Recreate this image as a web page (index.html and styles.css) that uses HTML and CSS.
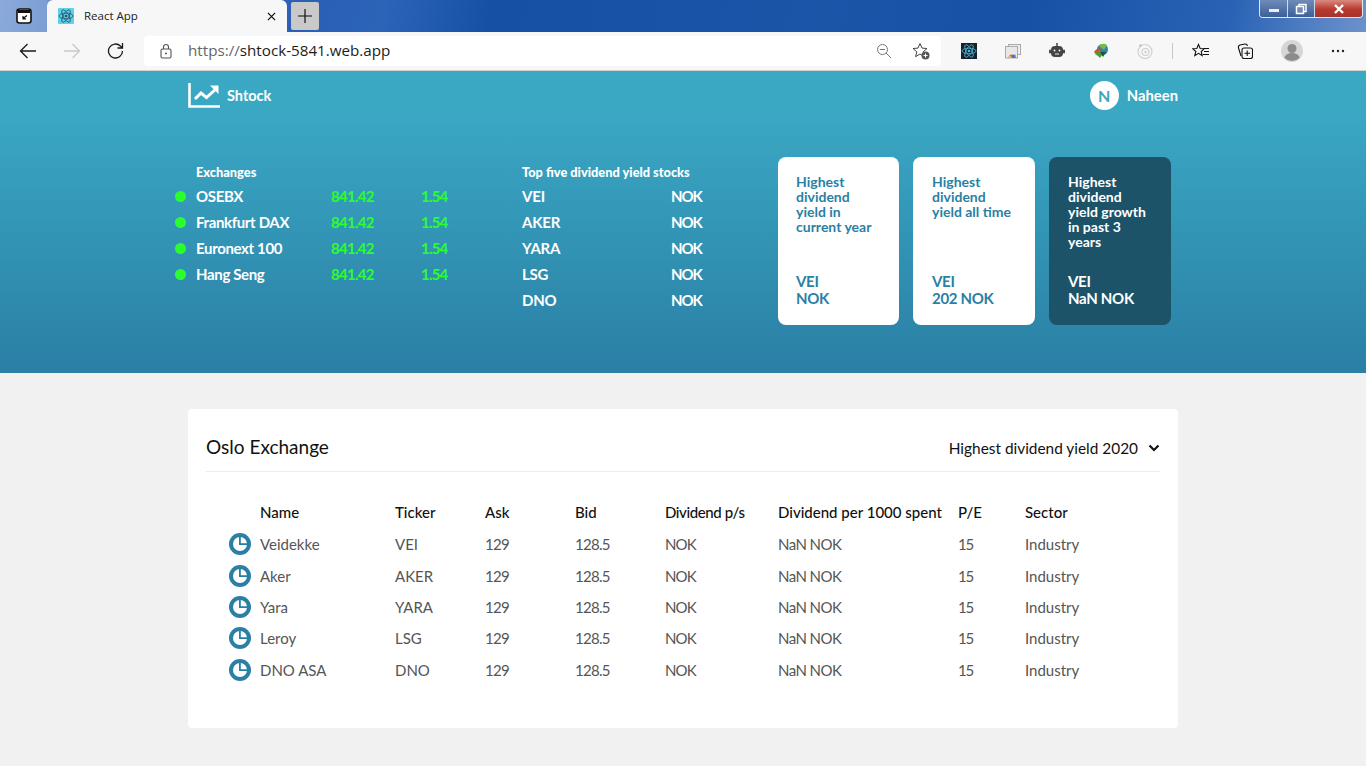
FILE: index.html
```html
<!DOCTYPE html>
<html lang="en">
<head>
<meta charset="utf-8">
<title>React App</title>
<link rel="stylesheet" href="styles.css">
</head>
<body>
<div class="titlebar">
  <div class="tab-left">
    <svg class="ic16" viewBox="0 0 16 16"><rect x="1" y="1" width="14" height="14" rx="2.500" fill="#fff" stroke="#111" stroke-width="1.600"/><path d="M2 2h12v3H2z" fill="#111"/><path d="M11 7.500 7 10.500M7 8v2.800h3" fill="none" stroke="#111" stroke-width="1.200"/></svg>
  </div>
  <div class="tab">
    <svg class="favicon" viewBox="0 0 16 16"><rect width="16" height="16" rx="1" fill="#5fd0ee"/><g fill="none" stroke="#24505f" stroke-width=".8"><ellipse cx="8" cy="8" rx="7" ry="2.800"/><ellipse cx="8" cy="8" rx="7" ry="2.800" transform="rotate(60 8 8)"/><ellipse cx="8" cy="8" rx="7" ry="2.800" transform="rotate(120 8 8)"/></g><circle cx="8" cy="8" r="1.300" fill="#24505f"/></svg>
    <span class="tab-title">React App</span>
    <svg class="tab-x" viewBox="0 0 10 10"><path d="M1 1l8 8M9 1l-8 8" stroke="#111" stroke-width="1.400"/></svg>
  </div>
  <div class="newtab"><svg viewBox="0 0 16 16"><path d="M8 1v14M1 8h14" stroke="#111" stroke-width="1.200"/></svg></div>
  <div class="winctl">
    <span class="wb wb-min"><i class="min-bar"></i></span>
    <span class="wb wb-max"><svg viewBox="0 0 12 12" width="12" height="12"><rect x="4" y="1.500" width="7" height="7" fill="none" stroke="#fff" stroke-width="1.500"/><rect x="1.500" y="3.500" width="7" height="7" fill="#6f8cb8" stroke="#fff" stroke-width="1.500"/></svg></span>
    <span class="wb wb-close"><svg viewBox="0 0 12 10" width="12" height="10"><path d="M2 1l8 8M10 1l-8 8" stroke="#fff" stroke-width="2.400"/></svg></span>
  </div>
</div>
<div class="toolbar">
  <svg class="nav" viewBox="0 0 18 18"><path d="M17 9H1.500M8.500 2 1.500 9l7 7" fill="none" stroke="#1a1a1a" stroke-width="1.300"/></svg>
  <svg class="nav nav-fwd" viewBox="0 0 18 18"><path d="M1 9h15.500M9.500 2l7 7-7 7" fill="none" stroke="#c9c9c9" stroke-width="1.300"/></svg>
  <svg class="nav nav-reload" viewBox="0 0 18 18"><path d="M15.500 9a7 7 0 1 1-2.100-5L15.500 6M15.500 1v5h-5" fill="none" stroke="#1a1a1a" stroke-width="1.300"/></svg>
  <div class="omnibox">
    <svg class="lock" viewBox="0 0 14 16"><rect x="2" y="6" width="10" height="9" rx="1.500" fill="none" stroke="#555" stroke-width="1.100"/><path d="M4.500 6V4a2.500 2.500 0 0 1 5 0v2" fill="none" stroke="#555" stroke-width="1.100"/><circle cx="7" cy="10.500" r="1" fill="#555"/></svg>
    <span class="url"><span class="url-dim">https://</span>shtock-5841.web.app</span>
    <svg class="omni-ic zoom-ic" viewBox="0 0 16 16"><circle cx="6.500" cy="6.500" r="5" fill="none" stroke="#777" stroke-width="1"/><path d="M10 10l5 5M4 6.500h5" stroke="#777" stroke-width="1"/></svg>
    <svg class="omni-ic fav-ic" viewBox="0 0 18 18"><path d="M8 1.500l2 4.600 5 .4-3.800 3.300 1.200 4.900L8 12l-4.400 2.700 1.200-4.900L1 6.500l5-.4z" fill="none" stroke="#444" stroke-width="1"/><circle cx="13.500" cy="13.500" r="4" fill="#555"/><path d="M13.500 11.500v4M11.500 13.500h4" stroke="#fff" stroke-width="1"/></svg>
  </div>
  <div class="ext">
    <svg class="ext-ic" viewBox="0 0 16 16"><rect width="16" height="16" fill="#14222c"/><g fill="none" stroke="#4fb8dc" stroke-width=".8"><ellipse cx="8" cy="8" rx="7" ry="2.800"/><ellipse cx="8" cy="8" rx="7" ry="2.800" transform="rotate(60 8 8)"/><ellipse cx="8" cy="8" rx="7" ry="2.800" transform="rotate(120 8 8)"/></g><circle cx="8" cy="8" r="1.300" fill="#4fb8dc"/></svg>
    <svg class="ext-ic" viewBox="0 0 16 16"><rect x="3.500" y="1.500" width="12" height="10" fill="#eee" stroke="#aaa"/><rect x=".5" y="3.500" width="12" height="11.500" fill="#e8e8e8" stroke="#aaa"/><path d="M3.500 15a3.500 3.500 0 0 1 7 0z" fill="#e34b3c"/><path d="M7 15a3.500 3.500 0 0 1 3.500-3.500V15z" fill="#3a7de0"/><path d="M3.500 15A3.500 3.500 0 0 1 5 12l2 3z" fill="#f2c230"/></svg>
    <svg class="ext-ic" viewBox="0 0 16 16"><path d="M8 0v3" stroke="#444" stroke-width="1.500"/><rect x="2" y="3" width="12" height="11" rx="4" fill="#444"/><rect x="0" y="6.500" width="2" height="4" rx="1" fill="#444"/><rect x="14" y="6.500" width="2" height="4" rx="1" fill="#444"/><circle cx="5.500" cy="7.500" r="1" fill="#eee"/><circle cx="10.500" cy="7.500" r="1" fill="#eee"/><path d="M6 11h4" stroke="#eee"/></svg>
    <svg class="ext-ic" viewBox="0 0 16 16"><circle cx="9.500" cy="6.500" r="5.500" fill="#2f7fb8"/><path d="M6 3a5.500 5.500 0 0 1 8-1l-3 5z" fill="#7fb93c"/><path d="M1 9a7 7 0 0 1 8-3l-2 2a5 5 0 0 0-4 3z" fill="#d6502c"/><path d="M2 11a6 6 0 0 1 6-3l1 4-2 3-2-2z" fill="#4e9a32"/><path d="M7 9h6l-3 5z" fill="#1d5a2a"/></svg>
    <svg class="ext-ic" viewBox="0 0 16 16"><g fill="none" stroke="#cfcfcf" stroke-width="1.200"><circle cx="8" cy="8.500" r="7"/><circle cx="8.500" cy="9" r="3.500"/></g><circle cx="3.500" cy="2.500" r="1.200" fill="#bdbdbd"/><circle cx="8.500" cy="9" r="1.200" fill="#cfcfcf"/></svg>
    <i class="ext-sep"></i>
    <svg class="ext-ic ext-star" viewBox="0 0 18 16"><path d="M6.500 1.500l1.700 4 4 .3-3 2.700 1 4.200-3.700-2.300-3.700 2.300 1-4.200-3-2.700 4-.3z" fill="none" stroke="#111" stroke-width="1.100"/><path d="M11.500 5.500H17M12 8.500h5M11 11.500h6" stroke="#111" stroke-width="1.100"/></svg>
    <svg class="ext-ic" viewBox="0 0 16 16"><path d="M4 13 1.500 5Q1 2.500 3 2l5-1q2-.2 2.500 2" fill="none" stroke="#111" stroke-width="1.100"/><rect x="5" y="5" width="10.500" height="10.500" rx="2" fill="#f7f7f7" stroke="#111" stroke-width="1.100"/><path d="M10.200 7.500v5.500M7.500 10.300h5.500" stroke="#111" stroke-width="1.100"/></svg>
    <svg class="avatar" viewBox="0 0 22 22"><circle cx="11" cy="11" r="11" fill="#d6d6d6"/><circle cx="11" cy="8.500" r="4.500" fill="#8c8c8c"/><path d="M3.500 18a7.500 5 0 0 1 15 0 11 11 0 0 1-15 0z" fill="#8c8c8c"/></svg>
    <svg class="more" viewBox="0 0 14 4"><circle cx="2" cy="2" r="1.200" fill="#222"/><circle cx="7" cy="2" r="1.200" fill="#222"/><circle cx="12" cy="2" r="1.200" fill="#222"/></svg>
  </div>
</div>
<section class="hero">
  <div class="topnav">
    <div class="brand">
      <svg class="brand-ic" viewBox="0 0 32 25"><path d="M1.500 0v23.500H32" fill="none" stroke="#fff" stroke-width="2.600"/><path d="M7 16l6-6 5.500 4.500L29 5" fill="none" stroke="#fff" stroke-width="3"/><path d="M22 2.500h8.500V11z" fill="#fff"/></svg>
      <span>Shtock</span>
    </div>
    <div class="user"><span class="user-badge">N</span><span>Naheen</span></div>
  </div>
  <div class="hero-main">
    <div class="exchanges">
      <div class="col-title ex-title">Exchanges</div>
      <div class="ex-row"><i class="dot"></i><span class="ex-name">OSEBX</span><span class="ex-val">841.42</span><span class="ex-chg">1.54</span></div>
      <div class="ex-row"><i class="dot"></i><span class="ex-name">Frankfurt DAX</span><span class="ex-val">841.42</span><span class="ex-chg">1.54</span></div>
      <div class="ex-row"><i class="dot"></i><span class="ex-name">Euronext 100</span><span class="ex-val">841.42</span><span class="ex-chg">1.54</span></div>
      <div class="ex-row"><i class="dot"></i><span class="ex-name">Hang Seng</span><span class="ex-val">841.42</span><span class="ex-chg">1.54</span></div>
    </div>
    <div class="top-five">
      <div class="col-title">Top five dividend yield stocks</div>
      <div class="tf-row"><span class="tf-name">VEI</span><span class="tf-val">NOK</span></div>
      <div class="tf-row"><span class="tf-name">AKER</span><span class="tf-val">NOK</span></div>
      <div class="tf-row"><span class="tf-name">YARA</span><span class="tf-val">NOK</span></div>
      <div class="tf-row"><span class="tf-name">LSG</span><span class="tf-val">NOK</span></div>
      <div class="tf-row"><span class="tf-name">DNO</span><span class="tf-val">NOK</span></div>
    </div>
    <div class="cards">
      <div class="card card-a"><div class="card-title">Highest dividend yield in current year</div><div class="card-val">VEI<br>NOK</div></div>
      <div class="card card-b"><div class="card-title">Highest dividend yield all time</div><div class="card-val">VEI<br>202 NOK</div></div>
      <div class="card card-dark card-b"><div class="card-title">Highest dividend yield growth in past 3 years</div><div class="card-val">VEI<br>NaN NOK</div></div>
    </div>
  </div>
</section>
<main class="content">
  <div class="panel">
    <div class="panel-head">
      <h2 class="panel-title">Oslo Exchange</h2>
      <div class="select">Highest dividend yield 2020<svg class="chev" viewBox="0 0 12 8"><path d="M1.500 1.500 6 6l4.500-4.500" fill="none" stroke="#111" stroke-width="2.200"/></svg></div>
    </div>
    <table class="stocks">
      <thead>
        <tr><th class="c-ic"></th><th class="c-name">Name</th><th class="c-tk">Ticker</th><th class="c-ask">Ask</th><th class="c-bid">Bid</th><th class="c-dv">Dividend p/s</th><th class="c-dk">Dividend per 1000 spent</th><th class="c-pe">P/E</th><th>Sector</th></tr>
      </thead>
      <tbody>
        <tr><td><svg class="pie" viewBox="0 0 22 22"><use href="#pie"/></svg></td><td>Veidekke</td><td>VEI</td><td>129</td><td>128.5</td><td>NOK</td><td>NaN NOK</td><td>15</td><td>Industry</td></tr>
        <tr class="r2"><td><svg class="pie" viewBox="0 0 22 22"><use href="#pie"/></svg></td><td>Aker</td><td>AKER</td><td>129</td><td>128.5</td><td>NOK</td><td>NaN NOK</td><td>15</td><td>Industry</td></tr>
        <tr><td><svg class="pie" viewBox="0 0 22 22"><use href="#pie"/></svg></td><td>Yara</td><td>YARA</td><td>129</td><td>128.5</td><td>NOK</td><td>NaN NOK</td><td>15</td><td>Industry</td></tr>
        <tr><td><svg class="pie" viewBox="0 0 22 22"><use href="#pie"/></svg></td><td>Leroy</td><td>LSG</td><td>129</td><td>128.5</td><td>NOK</td><td>NaN NOK</td><td>15</td><td>Industry</td></tr>
        <tr class="r2"><td><svg class="pie" viewBox="0 0 22 22"><use href="#pie"/></svg></td><td>DNO ASA</td><td>DNO</td><td>129</td><td>128.5</td><td>NOK</td><td>NaN NOK</td><td>15</td><td>Industry</td></tr>
      </tbody>
    </table>
  </div>
</main>
<svg class="defs" width="0" height="0"><defs><g id="pie"><circle cx="11" cy="11" r="11" fill="#2a7fa5"/><circle cx="11" cy="11" r="7" fill="#fff"/><path d="M10 3v9h9v-1.800h-7.200V3z" fill="#2a7fa5"/></g></defs></svg>
</body>
</html>
```
FILE: styles.css
```css
* { box-sizing: border-box; }
html, body { margin: 0; padding: 0; }
body { width: 1366px; height: 766px; overflow: hidden; background: #f1f1f1; font-family: "Lato", "Liberation Sans", sans-serif; color: #111; }
i { display: block; }
.defs { position: absolute; }

.titlebar { height: 32px; display: flex; position: relative; background: linear-gradient(100deg, #7c9fd6 0, #6d94cf 3%, #2a5fb4 22%, #2c64b8 28%, #1550a5 36%, #1a55a8 60%, #1651a6 75%, #2a63b5 90%, #6d92cc 100%); }
.tab-left { width: 47px; height: 32px; display: flex; align-items: center; justify-content: center; padding-left: 1px; background: rgba(255,255,255,.12); }
.ic16 { width: 16px; height: 16px; }
.tab { width: 240px; height: 32px; background: #f7f7f7; border-radius: 6px 6px 0 0; display: flex; align-items: center; padding: 0 11px; }
.favicon { width: 16px; height: 16px; margin-right: 10px; }
.tab-title { flex: 1; font: 11.500px "Open Sans", sans-serif; color: #222; margin-bottom: 1px; }
.tab-x { width: 9px; height: 9px; }
.newtab { width: 28px; height: 28px; margin: 2px 0 0 4px; background: #c9c9c9; border-radius: 2px; display: flex; align-items: center; justify-content: center; }
.newtab svg { width: 16px; height: 16px; }
.winctl { margin-left: auto; margin-right: 3px; width: 104px; height: 18px; display: flex; border: 1px solid #dfe7f2; border-top: 0; border-radius: 0 0 4px 4px; overflow: hidden; }
.wb { display: flex; align-items: center; justify-content: center; height: 17px; }
.wb-min { width: 28px; background: linear-gradient(#6f8cb8, #3c5f98); border-right: 1px solid #cfd9ea; }
.min-bar { width: 10px; height: 3px; background: #eee; margin-top: 4px; }
.wb-max { width: 27px; background: linear-gradient(#6f8cb8, #3c5f98); border-right: 1px solid #cfd9ea; }
.wb-close { flex: 1; background: linear-gradient(#d98a80, #b8392f 55%, #a8332b); }

.toolbar { height: 39px; background: #f7f7f7; border-bottom: 1px solid #d2d2d2; display: flex; align-items: center; }
.nav { width: 18px; height: 18px; margin-left: 19px; }
.nav-fwd { margin-left: 26px; }
.nav-reload { margin-left: 26px; }
.omnibox { width: 797px; height: 30px; margin-left: 19px; background: #fff; border-radius: 4px; display: flex; align-items: center; padding-left: 15px; }
.lock { width: 14px; height: 16px; }
.url { margin: 0 0 2px 15px; font: 15.200px/20px "Open Sans", sans-serif; color: #1d1d1d; flex: 1; }
.url-dim { color: #666; }
.omni-ic { width: 16px; height: 16px; }
.zoom-ic { margin-right: 20px; }
.fav-ic { width: 18px; height: 18px; margin-right: 11px; }
.ext { flex: 1; display: flex; align-items: center; padding-left: 20px; }
.ext-ic { width: 16px; height: 16px; margin-right: 28px; flex: none; }
.ext-star { width: 18px; margin: 0 27px 0 -1px; }
.ext-sep { width: 1px; height: 16px; background: #c8c8c8; margin: 0 20px 0 -9px; }
.avatar { width: 22px; height: 22px; margin: 0 28px 0 0; }
.more { width: 14px; height: 4px; }

.hero { height: 302px; background: linear-gradient(#3aa9c4 0, #3aa7c3 15%, #2a7fa5 100%); color: #fff; }
.topnav { width: 990px; height: 48px; margin: 0 auto; display: flex; align-items: center; justify-content: space-between; }
.brand { display: flex; align-items: center; gap: 7px; font-size: 14.500px; font-weight: 700; }
.brand-ic { width: 32px; height: 25px; }
.user { display: flex; align-items: center; gap: 8px; font-size: 14.800px; font-weight: 700; }
.user-badge { width: 29px; height: 29px; background: #fff; border-radius: 50%; color: #3aa7c3; display: flex; align-items: center; justify-content: center; font-size: 16px; }
.hero-main { display: flex; padding: 38px 0 0 175px; }
.exchanges { width: 347px; padding-top: 8px; }
.col-title { font-size: 12.800px; font-weight: 900; line-height: 14px; margin-bottom: 4px; white-space: nowrap; }
.ex-title { padding-left: 21px; }
.ex-row, .tf-row { height: 26px; display: flex; align-items: center; font-size: 15px; font-weight: 700; }
.dot { width: 11px; height: 11px; border-radius: 50%; background: #2bff2b; margin-right: 10px; }
.ex-name { width: 135px; letter-spacing: -.35px; }
.ex-val { width: 90px; color: #2bff2b; letter-spacing: -.7px; }
.ex-chg { color: #2bff2b; letter-spacing: -.8px; }
.top-five { width: 256px; padding-top: 8px; }
.tf-name { width: 149px; letter-spacing: -.2px; }
.tf-val { letter-spacing: -1.100px; }
.cards { display: flex; gap: 14px; }
.card { width: 121px; height: 168px; border-radius: 8px; background: #fff; color: #2a7fa5; padding: 17px 14px 18px 18px; display: flex; flex-direction: column; justify-content: space-between; }
.card-b { width: 122px; padding-left: 19px; }
.card-dark { background: #1c5368; color: #fff; }
.card-title { font-size: 14px; line-height: 15px; font-weight: 700; max-width: 84px; }
.card-val { font-size: 15px; line-height: 17px; font-weight: 700; letter-spacing: -.3px; }

.content { padding: 36px 188px 0; }
.panel { height: 319px; background: #fff; border-radius: 4px; padding: 0 18px; }
.panel-head { height: 63px; padding-top: 12px; border-bottom: 1px solid #ececec; display: flex; align-items: center; justify-content: space-between; }
.panel-title { margin: 0; font-size: 19px; font-weight: 400; color: #111; }
.select { display: flex; align-items: center; gap: 10px; margin-top: 4px; font-size: 15.400px; color: #111; }
.chev { width: 12px; height: 8px; }
.stocks { border-collapse: collapse; table-layout: fixed; margin: 24px 0 0 23px; width: 920px; font-size: 15px; }
.stocks th { text-align: left; font-weight: 500; color: #111; padding: 0; height: 32px; }
.stocks td { padding: 0; height: 31px; color: #555; vertical-align: middle; }
.stocks .r2 td { height: 32px; padding-top: 2px; }
.stocks td:nth-child(4), .stocks td:nth-child(5) { letter-spacing: -.7px; }
.stocks td:nth-child(6) { letter-spacing: -.9px; }
.stocks td:nth-child(7) { letter-spacing: -.55px; }
.stocks td:nth-child(8) { letter-spacing: -1.200px; }
.c-dv { letter-spacing: -.4px; }
.c-ic { width: 31px; }
.c-name { width: 135px; }
.c-tk { width: 90px; }
.c-ask { width: 90px; }
.c-bid { width: 90px; }
.c-dv { width: 113px; }
.c-dk { width: 180px; }
.c-pe { width: 67px; }
.pie { width: 22px; height: 22px; display: block; }
```
